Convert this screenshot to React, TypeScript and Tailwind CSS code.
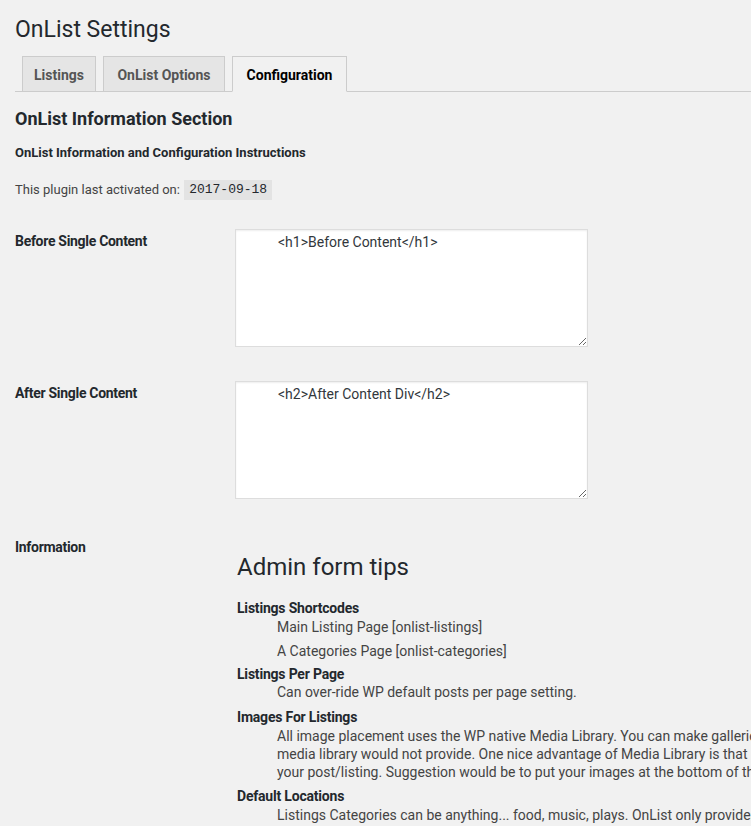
import React from 'react';

const tabs = [
  { label: 'Listings', width: 'w-[74px]', active: false },
  { label: 'OnList Options', width: 'w-[122px]', active: false },
  { label: 'Configuration', width: 'w-[115px]', active: true },
];

const FieldRow = ({ label, value, top }: { label: string; value: string; top: string }) => (
  <div className={`flex ${top}`}>
    <div className="w-[220px] shrink-0 pt-[2px] text-[14px] leading-[20px] font-bold tracking-[-0.3px] text-[#23282d]">{label}</div>
    <textarea
      readOnly
      defaultValue={value}
      className="w-[353px] h-[118px] shrink-0 bg-white border border-[#ddd] shadow-[inset_0_1px_2px_rgba(0,0,0,0.07)] pt-[2px] pl-[42px] pr-[6px] text-[14px] leading-[20px] text-[#32373c] outline-none"
    />
  </div>
);

export default function App() {
  return (
    <div className="min-h-[826px] w-full overflow-hidden bg-[#f1f1f1] pl-[15px] text-[#444] font-['Roboto','Liberation_Sans',sans-serif]">
      <h1 className="pt-[15px] text-[23px] leading-[29px] font-normal text-[#23282d]">OnList Settings</h1>

      {/* tabs */}
      <div className="mt-[12px] flex gap-[7px] pl-[7px] border-b border-[#ccc]">
        {tabs.map((t) => (
          <div
            key={t.label}
            className={`${t.width} h-[36px] -mb-px flex items-center justify-center pt-[2px] border text-[14px] font-bold ${
              t.active ? 'bg-[#f1f1f1] border-[#ccc] border-b-[#f1f1f1] text-black' : 'bg-[#e5e5e5] border-[#ccc] text-[#555]'
            }`}
          >
            {t.label}
          </div>
        ))}
      </div>

      <h2 className="mt-[15px] text-[18px] leading-[24px] font-bold text-[#23282d]">OnList Information Section</h2>
      <h3 className="mt-[13px] text-[13px] leading-[18px] font-bold text-[#23282d]">OnList Information and Configuration Instructions</h3>

      <div className="mt-[18px] flex items-center h-[20px] text-[13px]">
        <span>This plugin last activated on:&nbsp;</span>
        <code className="ml-[1px] h-[20px] flex items-center px-[5px] bg-[#e3e3e3] text-[13px] text-[#23282d] font-['Liberation_Mono',monospace]">2017-09-18</code>
      </div>

      <FieldRow top="mt-[29px]" label="Before Single Content" value="<h1>Before Content</h1>" />
      <FieldRow top="mt-[34px]" label="After Single Content" value="<h2>After Content Div</h2>" />

      <div className="mt-[37px] flex">
        <div className="w-[222px] shrink-0 pt-[1px] text-[14px] leading-[20px] font-bold tracking-[-0.3px] text-[#23282d]">Information</div>
        <div className="pt-[17px] whitespace-nowrap text-[14px]">
          <h2 className="text-[24px] leading-[29px] font-normal text-[#23282d]">Admin form tips</h2>
          <dl className="mt-[17px] leading-[18px]">
            <dt className="font-bold tracking-[-0.2px] text-[#23282d]">Listings Shortcodes</dt>
            <dd className="mt-[1px] pl-[40px]">
              <p>Main Listing Page [onlist-listings]</p>
              <p className="mt-[6px]">A Categories Page [onlist-categories]</p>
            </dd>
            <dt className="mt-[5px] font-bold tracking-[-0.2px] text-[#23282d]">Listings Per Page</dt>
            <dd className="pl-[40px]">Can over-ride WP default posts per page setting.</dd>
            <dt className="mt-[7px] font-bold tracking-[-0.2px] text-[#23282d]">Images For Listings</dt>
            <dd className="mt-[1px] pl-[40px]">
              All image placement uses the WP native Media Library. You can make galleries and add images to your listings which the
              <br />
              media library would not provide. One nice advantage of Media Library is that images can be placed anywhere within
              <br />
              your post/listing. Suggestion would be to put your images at the bottom of the listing content.
            </dd>
            <dt className="mt-[6px] font-bold tracking-[-0.2px] text-[#23282d]">Default Locations</dt>
            <dd className="mt-[1px] pl-[40px]">
              Listings Categories can be anything... food, music, plays. OnList only provides a default set of locations for
              <br />
              locations and venues which can be changed at any time.
            </dd>
          </dl>
        </div>
      </div>
    </div>
  );
}
